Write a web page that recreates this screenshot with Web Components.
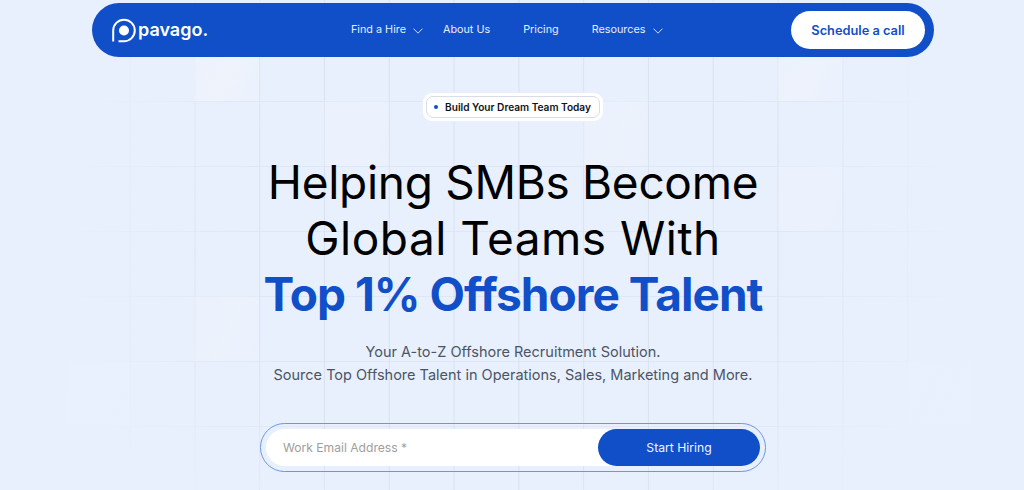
<!DOCTYPE html>
<html lang="en">
<head>
<meta charset="utf-8">
<title>Pavago</title>
<style>
    html, body { margin: 0; height: 100%; overflow: hidden; }
    body { background: #e8f0fe; font-family: "Inter", "Liberation Sans", sans-serif; }
</style>
</head>
<body>
<grid-backdrop></grid-backdrop>
<site-nav>
    <nav-link caret>Find a Hire</nav-link>
    <nav-link>About Us</nav-link>
    <nav-link>Pricing</nav-link>
    <nav-link caret>Resources</nav-link>
</site-nav>
<hero-section>
    <hero-badge slot="badge">Build Your Dream Team Today</hero-badge>
    <span slot="line">Helping SMBs Become</span>
    <span slot="line" class="wide">Global Teams With</span>
    <span slot="accent">Top 1% Offshore Talent</span>
    <span slot="sub">Your A-to-Z Offshore Recruitment Solution.</span>
    <span slot="sub">Source Top Offshore Talent in Operations, Sales, Marketing and More.</span>
    <signup-form slot="form"></signup-form>
</hero-section>

<script>
// faint grid behind the page, fades towards the edges
class GridBackdrop extends HTMLElement {
    constructor() {
        super();
        this.attachShadow({ mode: 'open' });
        // lighter cells [column, row, opacity] on the 64.8px grid
        const cells = [[3, 0, .7], [5, 1, .45], [9, 1, .5], [12, 0, .6], [12, 2, .45], [3, 4, .5], [1, 5, .2], [14, 5, .15]];
        const cellHtml = cells.map(([c, r, o]) =>
            `<i style="left:${c * 64.8}px;top:${36 + r * 65}px;opacity:${o}"></i>`).join('');
        this.shadowRoot.innerHTML = `
            <style>
                :host { position: absolute; inset: 0; display: block; overflow: hidden; }
                .lines {
                    position: absolute; inset: 0;
                    background-image:
                        linear-gradient(to right, #dae2f1 1px, transparent 1px),
                        linear-gradient(to bottom, #dfe6f4 1px, transparent 1px);
                    background-size: 64.8px 65px;
                    background-position: 0 36px;
                    -webkit-mask-image: radial-gradient(ellipse 450px 420px at 512px 240px, #000 60%, transparent 100%);
                    mask-image: radial-gradient(ellipse 450px 420px at 512px 240px, #000 60%, transparent 100%);
                }
                i {
                    position: absolute; width: 64.8px; height: 65px;
                    background: linear-gradient(115deg, rgba(243,245,250,.55) 0%, rgba(243,245,250,.8) 55%, rgba(243,245,250,.35) 100%);
                }
            </style>
            <div class="lines"></div>
            ${cellHtml}
        `;
    }
}

class NavLink extends HTMLElement {
    constructor() {
        super();
        this.attachShadow({ mode: 'open' });
        const caret = this.hasAttribute('caret') ? `
            <svg width="10" height="6" viewBox="0 0 10 6" fill="none" stroke="#cfdcf5" stroke-width="1">
                <path d="M.5.6 5 5.2 9.5.6"/>
            </svg>` : '';
        this.shadowRoot.innerHTML = `
            <style>
                :host { display: inline-flex; align-items: center; gap: 7.5px; color: #e6edfb; font-size: 10.8px; line-height: 16px; white-space: nowrap; }
                svg { margin: 1px -13.5px 0 0; }
            </style>
            <slot></slot>${caret}
        `;
    }
}

class SiteNav extends HTMLElement {
    constructor() {
        super();
        this.attachShadow({ mode: 'open' });
        this.shadowRoot.innerHTML = `
            <style>
                :host {
                    position: relative; display: flex; align-items: center;
                    box-sizing: border-box; width: 842px; height: 54px; margin: 3px 0 0 92px;
                    padding: 0 9px 0 20px; background: #114fc9; border-radius: 27px;
                    font-family: "Inter", "Liberation Sans", sans-serif;
                }
                .logo { display: flex; align-items: center; gap: 2px; width: 239px; color: #fff; }
                .logo svg { display: block; }
                .word { font-size: 18px; font-weight: 600; line-height: 20px; margin-top: -1px; }
                .links { display: flex; align-items: center; gap: 33px; flex: 1; }
                .cta {
                    display: flex; align-items: center; justify-content: center;
                    width: 134px; height: 38px; background: #fff; border-radius: 19px;
                    color: #114fc9; font-size: 12.8px; font-weight: 600; white-space: nowrap;
                }
            </style>
            <div class="logo">
                <svg width="24" height="25" viewBox="0 0 24 25" fill="none" stroke="#fff" stroke-width="2">
                    <path d="M1.2 23.5V12.5A10.8 10.8 0 1 1 12 23.3H6.5"/>
                    <circle cx="12" cy="12.5" r="5" fill="#fff" stroke="none"/>
                </svg>
                <span class="word">pavago.</span>
            </div>
            <div class="links"><slot></slot></div>
            <div class="cta">Schedule a call</div>
        `;
    }
}

class HeroBadge extends HTMLElement {
    constructor() {
        super();
        this.attachShadow({ mode: 'open' });
        this.shadowRoot.innerHTML = `
            <style>
                :host {
                    display: inline-block; padding: 3px; background: #fff; border-radius: 9px;
                    box-shadow: 0 0 0 .5px #eef1f8;
                }
                .inner {
                    display: flex; align-items: center; gap: 7px; height: 20px; padding: 0 8px 0 7px;
                    border: 1px solid #d9dde9; border-radius: 7px;
                    color: #10131a; font-size: 10.1px; font-weight: 600; white-space: nowrap;
                }
                .dot { width: 4px; height: 4px; border-radius: 50%; background: #114fc9; }
            </style>
            <div class="inner"><span class="dot"></span><slot></slot></div>
        `;
    }
}

class SignupForm extends HTMLElement {
    constructor() {
        super();
        this.attachShadow({ mode: 'open' });
        this.shadowRoot.innerHTML = `
            <style>
                :host {
                    display: flex; box-sizing: border-box; width: 506px; height: 49px; padding: 5px;
                    border: 1px solid #6d95e4; border-radius: 25px;
                }
                .field {
                    flex: 1; display: flex; background: #fff; border-radius: 19px;
                }
                input {
                    flex: 1; min-width: 0; border: 0; outline: 0; background: none;
                    padding: 0 0 0 17px; font: 12.1px "Inter", "Liberation Sans", sans-serif; color: #333;
                }
                input::placeholder { color: #a09d9b; opacity: 1; }
                button {
                    width: 162px; border: 0; border-radius: 19px; background: #114fc9;
                    color: #f2f5fd; font: 12.2px "Inter", "Liberation Sans", sans-serif;
                }
            </style>
            <div class="field">
                <input type="email" placeholder="Work Email Address *">
                <button type="button">Start Hiring</button>
            </div>
        `;
    }
}

class HeroSection extends HTMLElement {
    constructor() {
        super();
        this.attachShadow({ mode: 'open' });
        this.shadowRoot.innerHTML = `
            <style>
                :host {
                    position: relative; display: flex; flex-direction: column; align-items: center;
                    padding: 36px 0 0 2px; font-family: "Inter", "Liberation Sans", sans-serif;
                }
                h1 {
                    display: flex; flex-direction: column; align-items: center;
                    margin: 33px 0 0; font-size: 46px; line-height: 56px; font-weight: 400;
                    letter-spacing: -.3px; color: #000; white-space: nowrap;
                }
                .accent { font-weight: 700; color: #114fc9; letter-spacing: -.95px; }
                .sub {
                    display: flex; flex-direction: column; align-items: center;
                    margin-top: 18px; font-size: 14.5px; line-height: 23px; color: #4b5565;
                }
                .form { margin-top: 37px; }
                ::slotted(span) { display: block; }
                ::slotted(.wide) { letter-spacing: .5px; }
            </style>
            <slot name="badge"></slot>
            <h1><slot name="line"></slot><span class="accent"><slot name="accent"></slot></span></h1>
            <div class="sub"><slot name="sub"></slot></div>
            <div class="form"><slot name="form"></slot></div>
        `;
    }
}

customElements.define('grid-backdrop', GridBackdrop);
customElements.define('nav-link', NavLink);
customElements.define('site-nav', SiteNav);
customElements.define('hero-badge', HeroBadge);
customElements.define('signup-form', SignupForm);
customElements.define('hero-section', HeroSection);
</script>
</body>
</html>
